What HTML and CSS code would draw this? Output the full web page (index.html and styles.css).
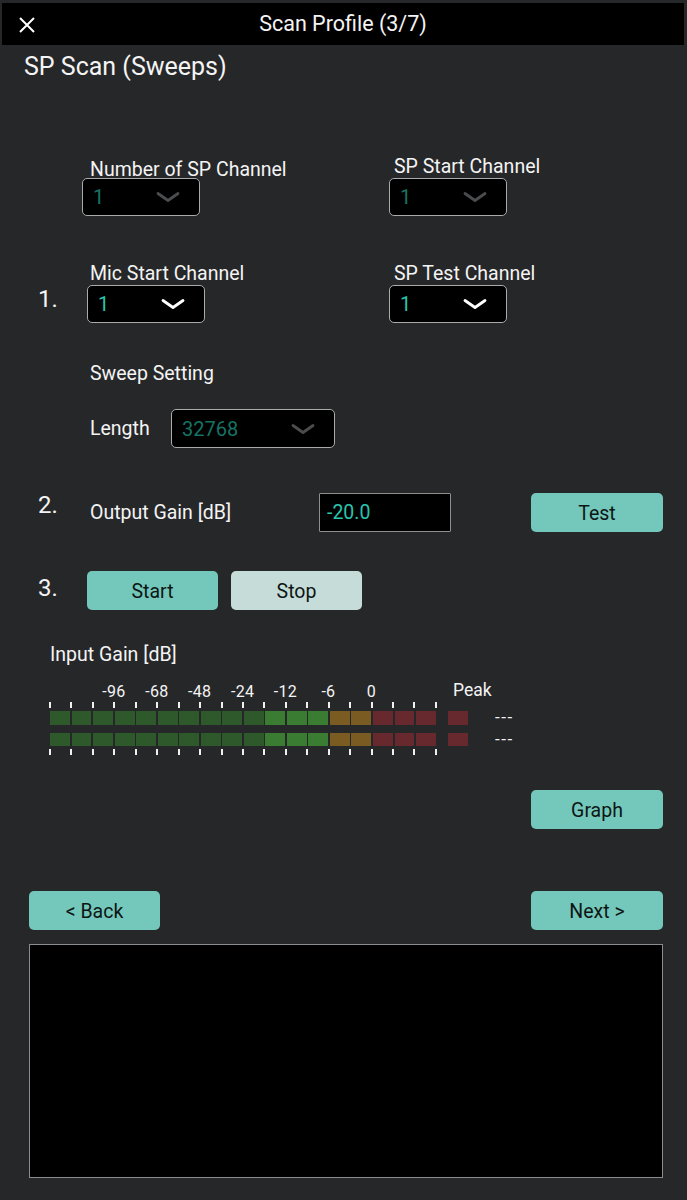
FILE: index.html
```html
<!DOCTYPE html>
<html>
<head>
<meta charset="utf-8">
<link rel="stylesheet" href="styles.css">
</head>
<body>
<div class="screen">
  <header class="topbar">
    <span class="close">
      <svg width="16" height="16" viewBox="0 0 16 16"><path d="M1 1 L15 15 M15 1 L1 15" stroke="#fff" stroke-width="2" fill="none"/></svg>
    </span>
    <h1 class="topbar-title">Scan Profile (3/7)</h1>
    <span class="topbar-side"></span>
  </header>

  <h2 class="page-title">SP Scan (Sweeps)</h2>

  <section class="step step-row1">
    <span class="num"></span>
    <div class="fields">
      <div class="field field-left">
        <label class="lbl lbl-low">Number of SP Channel</label>
        <div class="select select-a dim"><span class="val">1</span>
          <svg class="chev" width="24" height="10" viewBox="0 0 24 10"><polyline points="2,1.5 12,8.5 22,1.5"/></svg></div>
      </div>
      <div class="field field-right">
        <label class="lbl">SP Start Channel</label>
        <div class="select dim"><span class="val">1</span>
          <svg class="chev" width="24" height="10" viewBox="0 0 24 10"><polyline points="2,1.5 12,8.5 22,1.5"/></svg></div>
      </div>
    </div>
  </section>

  <section class="step step-row2">
    <span class="num num-1">1.</span>
    <div class="fields">
      <div class="field field-left">
        <label class="lbl">Mic Start Channel</label>
        <div class="select select-b"><span class="val">1</span>
          <svg class="chev" width="24" height="10" viewBox="0 0 24 10"><polyline points="2,1.5 12,8.5 22,1.5"/></svg></div>
      </div>
      <div class="field field-right">
        <label class="lbl">SP Test Channel</label>
        <div class="select"><span class="val">1</span>
          <svg class="chev" width="24" height="10" viewBox="0 0 24 10"><polyline points="2,1.5 12,8.5 22,1.5"/></svg></div>
      </div>
    </div>
  </section>

  <section class="sweep">
    <div class="lbl">Sweep Setting</div>
    <div class="length-row">
      <span class="lbl length-lbl">Length</span>
      <div class="select select-len dim"><span class="val">32768</span>
        <svg class="chev" width="24" height="10" viewBox="0 0 24 10"><polyline points="2,1.5 12,8.5 22,1.5"/></svg></div>
    </div>
  </section>

  <section class="step step-gain">
    <span class="num num-2">2.</span>
    <span class="lbl gain-lbl">Output Gain [dB]</span>
    <div class="input">-20.0</div>
    <button class="btn btn-right">Test</button>
  </section>

  <section class="step step-run">
    <span class="num num-3">3.</span>
    <button class="btn btn-start">Start</button>
    <button class="btn btn-stop">Stop</button>
  </section>

  <div class="lbl input-gain">Input Gain [dB]</div>

  <section class="meter-wrap">
    <div class="meter">
      <div class="scale">
        <span>-96</span><span>-68</span><span>-48</span><span>-24</span><span>-12</span><span>-6</span><span>0</span>
      </div>
      <div class="ticks"><i></i><i></i><i></i><i></i><i></i><i></i><i></i><i></i><i></i><i></i><i></i><i></i><i></i><i></i><i></i><i></i><i></i><i></i><i></i></div>
      <div class="bar bar-1">
        <b class="g"></b><b class="g"></b><b class="g"></b><b class="g"></b><b class="g"></b><b class="g"></b><b class="g"></b><b class="g"></b><b class="g"></b><b class="g"></b><b class="lg"></b><b class="lg"></b><b class="lg"></b><b class="o"></b><b class="o"></b><b class="r"></b><b class="r"></b><b class="r"></b>
      </div>
      <div class="bar bar-2">
        <b class="g"></b><b class="g"></b><b class="g"></b><b class="g"></b><b class="g"></b><b class="g"></b><b class="g"></b><b class="g"></b><b class="g"></b><b class="g"></b><b class="lg"></b><b class="lg"></b><b class="lg"></b><b class="o"></b><b class="o"></b><b class="r"></b><b class="r"></b><b class="r"></b>
      </div>
      <div class="ticks ticks-bottom"><i></i><i></i><i></i><i></i><i></i><i></i><i></i><i></i><i></i><i></i><i></i><i></i><i></i><i></i><i></i><i></i><i></i><i></i><i></i></div>
    </div>
    <div class="peak">
      <div class="peak-lbl">Peak</div>
      <div class="peak-box peak-box-1"></div>
      <div class="peak-box peak-box-2"></div>
    </div>
    <div class="vals">
      <div class="val-line val-line-1">---</div>
      <div class="val-line val-line-2">---</div>
    </div>
  </section>

  <div class="graph-row">
    <button class="btn">Graph</button>
  </div>

  <div class="nav-row">
    <button class="btn">&lt; Back</button>
    <button class="btn">Next &gt;</button>
  </div>

  <div class="log"></div>
</div>
</body>
</html>
```

FILE: styles.css
```css
* { box-sizing: border-box; }
html, body { margin: 0; padding: 0; background: #262729; }
body {
  font-family: Roboto, "Liberation Sans", sans-serif;
  color: #f4f4f4;
}
.screen {
  width: 687px;
  height: 1200px;
  padding-top: 3px;
  background: #262729;
  overflow: hidden;
}

/* top bar */
.topbar {
  margin: 0 3px 0 2px;
  height: 42px;
  background: #000;
  display: grid;
  grid-template-columns: 1fr auto 1fr;
  align-items: center;
}
.close {
  display: flex;
  padding-left: 17px;
  padding-top: 1px;
}
.topbar-title {
  margin: 0;
  font-size: 21.5px;
  font-weight: 400;
  line-height: 42px;
  letter-spacing: 0;
}

.page-title {
  margin: 7px 0 0 24px;
  font-size: 25px;
  font-weight: 400;
  line-height: 30px;
  letter-spacing: 0;
}

/* generic label */
.lbl {
  display: block;
  font-size: 19.5px;
  line-height: 20px;
  letter-spacing: 0;
  white-space: nowrap;
}

.step {
  display: flex;
  padding-left: 38px;
}
.num {
  width: 52px;
  flex: none;
  font-size: 24px;
  line-height: 24px;
}
.fields { display: flex; }
.field { display: flex; flex-direction: column; }
.field-left { width: 299px; }
.field-right .lbl { margin-left: 5px; margin-bottom: 1px; }

.step-row1 { margin-top: 75px; }
.lbl-low { margin-top: 3px; margin-bottom: -2px; }
.select-a { margin-left: -8px; }

.step-row2 { margin-top: 48px; }
.step-row2 .field-left .lbl { margin-bottom: 1px; }
.num-1 { padding-top: 23px; }
.select-b { margin-left: -3px; }

/* select */
.select {
  width: 118px;
  height: 38px;
  background: #000;
  border: 1.5px solid #a9abab;
  border-radius: 5px;
  display: flex;
  align-items: center;
  justify-content: space-between;
  padding: 0 19px 0 10px;
}
.select .val {
  font-size: 20px;
  color: #2ac4ad;
}
.chev polyline {
  fill: none;
  stroke: #fff;
  stroke-width: 2.8;
  stroke-linecap: round;
  stroke-linejoin: round;
}
.select.dim .val { color: #167364; }
.select.dim .chev polyline { stroke: #4b4c4d; }

.sweep {
  margin-top: 41px;
  padding-left: 90px;
}
.length-row {
  display: flex;
  align-items: center;
  margin-top: 25px;
}
.length-lbl { width: 81px; }
.select-len { width: 164px; height: 39px; }

/* gain row */
.step-gain {
  margin-top: 45px;
  align-items: center;
  padding-right: 24px;
}
.num-2 { align-self: flex-start; padding-top: 0; }
.gain-lbl { width: 229px; }
.input {
  width: 132px;
  height: 39px;
  background: #000;
  border: 1px solid #8d8f90;
  border-radius: 1px;
  color: #2ac4ad;
  font-size: 19.5px;
  display: flex;
  align-items: center;
  padding-left: 7px;
}
.btn {
  width: 132px;
  height: 39px;
  border: none;
  border-radius: 5px;
  background: #74c8bb;
  color: #0d1614;
  font-family: Roboto, "Liberation Sans", sans-serif;
  font-size: 19.5px;
  padding: 2px 0 0;
}
.btn-right { margin-left: auto; }

.step-run {
  margin-top: 39px;
  align-items: center;
}
.num-3 { align-self: flex-start; padding-top: 5px; }
.btn-start { margin-left: -3px; width: 131px; }
.btn-stop { margin-left: 13px; width: 131px; background: #c6dcd8; }

.input-gain {
  margin: 35px 0 0 50px;
}

/* meter */
.meter-wrap {
  display: flex;
  margin: 18px 0 0 49px;
}
.meter {
  width: 388px;
  display: flex;
  flex-direction: column;
}
.scale {
  height: 18px;
  display: flex;
  padding-left: 43.5px;
  font-size: 16px;
  line-height: 18px;
}
.scale span {
  width: 42.9px;
  text-align: center;
  letter-spacing: 0.3px;
}
.ticks {
  margin-top: 1.4px;
  height: 6px;
  display: flex;
  justify-content: space-between;
}
.ticks i {
  width: 2px;
  height: 6px;
  background: #f0f0f0;
}
.ticks-bottom { margin-top: 3.2px; }
.bar {
  height: 13.5px;
  margin: 0 1px;
  display: grid;
  grid-template-columns: repeat(18, 1fr);
  gap: 1.6px;
}
.bar-1 { margin-top: 2.7px; }
.bar-2 { margin-top: 8.1px; }
.bar .g { background: #2e5a2b; }
.bar .lg { background: #3b7c33; }
.bar .o { background: #7a5c22; }
.bar .r { background: #68292e; }

.peak {
  margin-left: 11px;
  width: 20px;
  display: flex;
  flex-direction: column;
}
.peak-lbl {
  height: 18px;
  margin-top: -2px;
  margin-bottom: 2px;
  padding-left: 5px;
  font-size: 17.5px;
  line-height: 18px;
  white-space: nowrap;
}
.peak-box {
  height: 13.5px;
  background: #68292e;
}
.peak-box-1 { margin-top: 10.1px; }
.peak-box-2 { margin-top: 8.1px; }

.vals {
  margin-left: 27px;
  display: flex;
  flex-direction: column;
}
.val-line {
  height: 13.5px;
  font-size: 17px;
  line-height: 13.5px;
  letter-spacing: 1.5px;
}
.val-line-1 { margin-top: 28.1px; }
.val-line-2 { margin-top: 8.1px; }

.graph-row {
  display: flex;
  justify-content: flex-end;
  padding-right: 24px;
  margin-top: 35px;
}
.nav-row {
  display: flex;
  justify-content: space-between;
  padding: 0 24px 0 29px;
  margin-top: 62px;
}
.nav-row .btn:first-child { width: 131px; }

.log {
  margin: 14px 0 0 29px;
  width: 634px;
  height: 234px;
  background: #000;
  border: 1px solid #8a8d8f;
}
```
